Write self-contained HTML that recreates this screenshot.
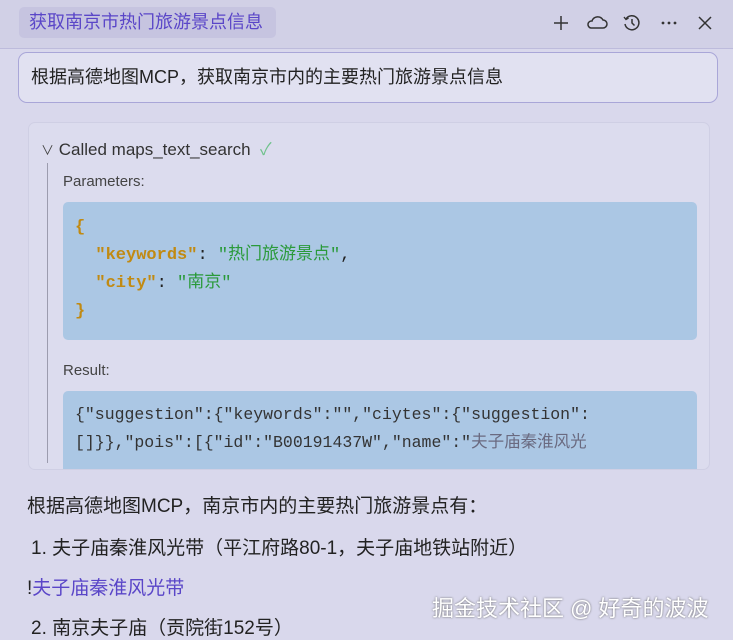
<!DOCTYPE html>
<html><head><meta charset="utf-8"><style>
*{margin:0;padding:0;box-sizing:border-box}
body{width:733px;height:637px;overflow:hidden;background:#d9d8ec;font-family:"Liberation Sans","Noto Sans CJK SC",sans-serif;color:#222;position:relative}
.hdr{position:absolute;left:0;top:0;width:733px;height:49px;background:#d1d0e6;border-bottom:1px solid #bdbbdc}
.tab{position:absolute;left:19px;top:7px;width:257px;height:31px;background:#c6c4e0;border-radius:5px;color:#5a46c8;font-size:18px;line-height:31px;padding-left:10px}
.ic{position:absolute;top:13px}
.q{position:absolute;left:18px;top:52px;width:700px;height:51px;border:1px solid #a9a6d8;border-radius:9px;background:#e1e1f1;font-size:18px;line-height:49px;padding-left:12px;color:#222}
.card{position:absolute;left:28px;top:122px;width:682px;height:348px;background:#dcdcee;border:1px solid #cfcfe4;border-radius:7px;overflow:hidden}
.called{position:absolute;left:12px;top:12px;font-size:17px;color:#333}
.bar{position:absolute;left:18px;top:40px;width:1px;height:300px;background:#9c9cae}
.lbl{position:absolute;left:34px;font-size:15px;color:#444}
.code{position:absolute;left:34px;width:634px;background:#abc7e4;border-radius:5px;font-family:"Liberation Mono","Noto Sans CJK SC",monospace;font-size:17px}
.k{color:#c18a12;font-weight:bold}.s{color:#2a9a3a}
.p{position:absolute;font-size:19px;color:#222}
</style></head><body>
<div class="hdr">
<div class="tab">获取南京市热门旅游景点信息</div>
<svg class="ic" style="left:552px" width="18" height="20" viewBox="0 0 18 20"><path d="M9 3v14M2 10h14" stroke="#333" stroke-width="1.5"/></svg>
<svg class="ic" style="left:586px" width="22" height="20" viewBox="0 0 22 20"><path d="M5 15h12a4 4 0 0 0 0-8 6 6 0 0 0-11 1 3.5 3.5 0 0 0-1 7z" fill="none" stroke="#333" stroke-width="1.5"/></svg>
<svg class="ic" style="left:622px" width="20" height="20" viewBox="0 0 20 20"><path d="M4 6a7 7 0 1 1-1 5" fill="none" stroke="#333" stroke-width="1.5"/><path d="M2 4l2 2.5 2.5-1.5" fill="none" stroke="#333" stroke-width="1.4"/><path d="M10 6v4l2.5 2.5" fill="none" stroke="#333" stroke-width="1.5"/></svg>
<svg class="ic" style="left:659px" width="20" height="20" viewBox="0 0 20 20"><circle cx="4" cy="10" r="1.4" fill="#333"/><circle cx="10" cy="10" r="1.4" fill="#333"/><circle cx="16" cy="10" r="1.4" fill="#333"/></svg>
<svg class="ic" style="left:696px" width="18" height="20" viewBox="0 0 18 20"><path d="M3 4l12 12M15 4L3 16" stroke="#333" stroke-width="1.5"/></svg>
</div>
<div class="q">根据高德地图MCP，获取南京市内的主要热门旅游景点信息</div>
<div class="card">
<div class="called"><span style="font-size:13px;color:#444">∨</span>&nbsp;Called maps_text_search&nbsp; <span style="color:#6fc28c">✓</span></div>
<div class="bar"></div>
<div class="lbl" style="top:50px">Parameters:</div>
<div class="code" style="top:79px;height:138px;padding:12px 0 0 12px;line-height:28px"><span class="k">{</span><br>&nbsp;&nbsp;<span class="k">"keywords"</span>: <span class="s">"热门旅游景点"</span>,<br>&nbsp;&nbsp;<span class="k">"city"</span>: <span class="s">"南京"</span><br><span class="k">}</span></div>
<div class="lbl" style="top:239px">Result:</div>
<div class="code" style="top:268px;height:90px;padding:10px 0 0 12px;line-height:28px;color:#333;font-size:16.5px">{"suggestion":{"keywords":"","ciytes":{"suggestion":<br>[]}},"pois":[{"id":"B00191437W","name":"<span style="color:#6a6a80">夫子庙秦淮风光</span></div>
</div>
<div class="p" style="left:27px;top:491px">根据高德地图MCP，南京市内的主要热门旅游景点有：</div>
<div class="p" style="left:31px;top:533px">1. 夫子庙秦淮风光带（平江府路80-1，夫子庙地铁站附近）</div>
<div class="p" style="left:27px;top:573px">!<span style="color:#5a46c8">夫子庙秦淮风光带</span></div>
<div class="p" style="left:31px;top:613px">2. 南京夫子庙（贡院街152号）</div>
<div class="p" style="left:432px;top:591px;font-size:22px;color:#fff;text-shadow:0 0 2px #666">掘金技术社区 @ 好奇的波波</div>
</body></html>
